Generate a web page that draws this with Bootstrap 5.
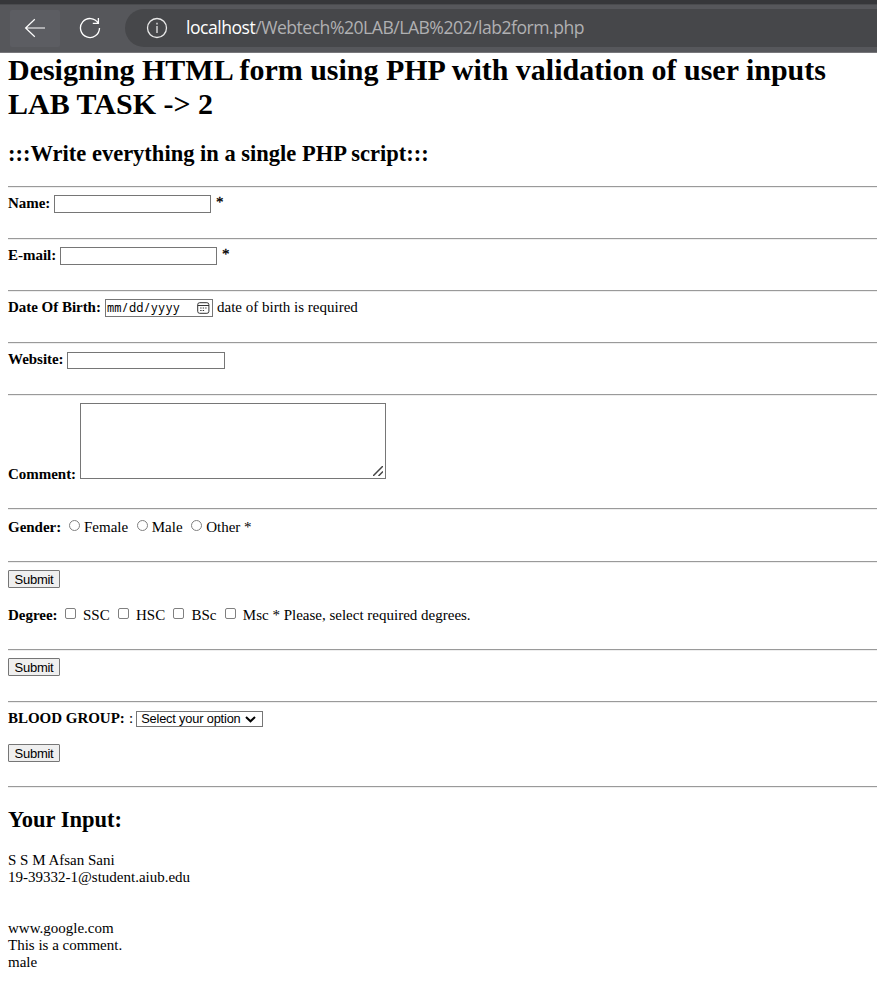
<!DOCTYPE html>
<html lang="en">
<head>
<meta charset="utf-8">
<meta name="viewport" content="width=device-width, initial-scale=1">
<title>lab2form.php</title>
<link rel="stylesheet" href="https://cdn.jsdelivr.net/npm/bootstrap@5.3.0/dist/css/bootstrap.min.css">
<style>
body{font:15px/17px "Liberation Serif",serif;color:#000;background:#fff;overflow:hidden}
.browser-bar{height:53px;background:#56575b;border-top:4px solid #36373a;border-bottom:1px solid #77777b;box-shadow:inset 0 1px #4a4b4e}
.back-tile{width:50px;height:37px;margin-left:10px;background:#5c5d62;border-radius:2px}
.reload-tile{width:65px;height:37px;padding-right:5px}
.address{height:38px;background:#46474a;border-radius:19px 0 0 19px;font:17.6px/24px "Open Sans",sans-serif;color:#b0b0b2}
.address svg{margin-left:21px;margin-right:18px}
.address-text{letter-spacing:-.5px;margin-top:-2px}
.address-text b{font-weight:400;color:#fff}
.page{margin-left:8px}
h1{font-size:29.98px;line-height:34px;font-weight:700;height:84px;margin:0}
h2{font-size:22.5px;line-height:26px;font-weight:700;margin:0}
.sub-title{height:49px;padding-top:4px}
.block{height:52px;border-top:1px solid #9a9a9a;padding-top:8px;box-shadow:inset 0 1px #eee}
.line{height:18px}
.lab{font-weight:700;letter-spacing:-.03px}
.w-name{width:46px}.w-mail{width:52px}.w-date{width:97px}.w-site{width:59px}.w-comment{width:72px}.w-gender{width:61px}.w-degree{width:57px}.w-blood{width:121px}
.entry{width:157px;height:18px;border:1px solid #767676;border-radius:0;padding:1px 2px;background:#fff;outline:0}
.entry-site{width:158px;height:17px;margin-top:1px}
.date-box{width:108px;height:18px;border:1px solid #767676;padding:0 2px 0 1px;font:12px/16px "Noto Sans Mono","DejaVu Sans Mono","Liberation Mono",monospace;letter-spacing:.1px}
.area{width:306px;height:76px;border:1px solid #767676;padding:0 2px 2px 0}
.w-comment{height:13px}
.h-comment{height:114px}.h-gender{height:53px}.h-degree{height:88px}.h-blood{height:85px}
.gender-row{padding-top:2px;height:19px}
.tick{appearance:none;width:11px;height:11px;border:1px solid #808080;border-radius:2px;margin:0 7px 3px 8.3px;background:#fff;flex:none}
.tick-radio{border-radius:50%;margin:0 4px 4px 8.6px}
.send{width:52px;height:18px;border:1px solid #767676;border-radius:1px;background:#efefef;color:#000;padding:0;font:13px/15px "Liberation Sans",sans-serif;letter-spacing:-.25px}
.pick{width:127px;height:16px;border:1px solid #767676;padding:0 6px 0 4px;font:12.8px/14px "Liberation Sans",sans-serif;letter-spacing:-.17px;margin:1px 0 0 3px}
.star{margin-left:5px;margin-top:-1px;-webkit-text-stroke:.3px #000}
.results{padding-top:3px}
</style>
<script src="https://cdn.jsdelivr.net/npm/bootstrap@5.3.0/dist/js/bootstrap.bundle.min.js"></script>
</head>
<body>
<header class="browser-bar d-flex align-items-center">
  <div class="back-tile d-flex align-items-center justify-content-center"><svg width="22" height="20" viewBox="0 0 22 20" fill="none" stroke="#fff" stroke-width="1.2"><path d="M21 10H1.4M10.8 1.2L1.6 10l9.2 8.8"/></svg></div>
  <div class="reload-tile d-flex align-items-center justify-content-center"><svg width="22" height="22" viewBox="0 0 22 22" fill="none" stroke="#fff" stroke-width="1.3"><path d="M19.2 6.2A9.5 9.5 0 1 0 20.5 11M19.4 1v5.4h-5.6"/></svg></div>
  <div class="address d-flex align-items-center flex-grow-1"><svg width="22" height="22" viewBox="0 0 22 22" fill="none" stroke="#e8e8e8" stroke-width="1.3"><circle cx="11" cy="11" r="9.5"/><path d="M11 9v7M11 5.8v1.6"/></svg><span class="address-text text-nowrap"><b>localhost</b>/Webtech%20LAB/LAB%202/lab2form.php</span></div>
</header>
<main class="page text-nowrap">
  <h1>Designing HTML form using PHP with validation of user inputs<br>LAB TASK -&gt; 2</h1>
  <h2 class="sub-title">:::Write everything in a single PHP script:::</h2>
  <section class="block"><div class="line d-flex"><label class="lab w-name" for="name">Name:</label><input class="entry" id="name"><span class="star">*</span></div></section>
  <section class="block"><div class="line d-flex"><label class="lab w-mail" for="mail">E-mail:</label><input class="entry" id="mail"><span class="star">*</span></div></section>
  <section class="block"><div class="line d-flex"><span class="lab w-date">Date Of Birth:</span>
    <div class="date-box d-flex justify-content-between align-items-center"><span>mm/dd/yyyy</span><svg width="13" height="12" viewBox="0 0 13 12" fill="none" stroke="#333"><rect x=".7" y=".7" width="11.2" height="10.6" rx="2"/><path d="M1 3.5h11"/><path d="M3.2 6h1.4M5.7 6h1.4M8.2 6h1.4M3.2 8.5h1.4M5.7 8.5h1.4"/></svg></div><span class="ms-1">date of birth is required</span></div></section>
  <section class="block"><div class="line d-flex"><label class="lab w-site" for="site">Website:</label><input class="entry entry-site" id="site"></div></section>
  <section class="block h-comment"><div class="d-flex align-items-end"><span class="lab w-comment">Comment:</span><div class="area d-flex align-items-end justify-content-end"><svg width="10" height="10" viewBox="0 0 10 10" stroke="#444" stroke-width="1.5"><path d="M0 10L10 0M5.5 10l4.5-4.5"/></svg></div></div></section>
  <section class="block h-gender"><div class="gender-row d-flex align-items-center"><span class="lab w-gender">Gender:</span><input type="radio" class="tick tick-radio ms-0" name="g" id="g1"><label for="g1">Female</label><input type="radio" class="tick tick-radio" name="g" id="g2"><label for="g2">Male</label><input type="radio" class="tick tick-radio" name="g" id="g3"><label for="g3">Other *</label></div></section>
  <section class="block h-degree"><button class="send d-block">Submit</button>
    <div class="line d-flex align-items-center mt-3 pt-1"><span class="lab w-degree">Degree:</span><input type="checkbox" class="tick ms-0" id="d1"><label for="d1">SSC</label><input type="checkbox" class="tick" id="d2"><label for="d2">HSC</label><input type="checkbox" class="tick" id="d3"><label for="d3">BSc</label><input type="checkbox" class="tick" id="d4"><label for="d4">Msc * Please, select required degrees.</label></div></section>
  <section class="block"><button class="send d-block">Submit</button></section>
  <section class="block h-blood"><div class="line d-flex"><span class="lab w-blood">BLOOD GROUP:</span><span>:</span><div class="pick d-flex align-items-center justify-content-between"><span>Select your option</span><svg width="11" height="7" viewBox="0 0 11 7" fill="none" stroke="#000" stroke-width="2"><path d="M1 1l4.5 4.3L10 1"/></svg></div></div>
    <button class="send d-block mt-3">Submit</button></section>
  <section class="block h-auto pt-0"><h2 class="mt-3 pt-1">Your Input:</h2>
    <p class="results mt-3 mb-0">S S M Afsan Sani<br>19-39332-1@student.aiub.edu<br><br><br>www.google.com<br>This is a comment.<br>male</p></section>
</main>
</body>
</html>
